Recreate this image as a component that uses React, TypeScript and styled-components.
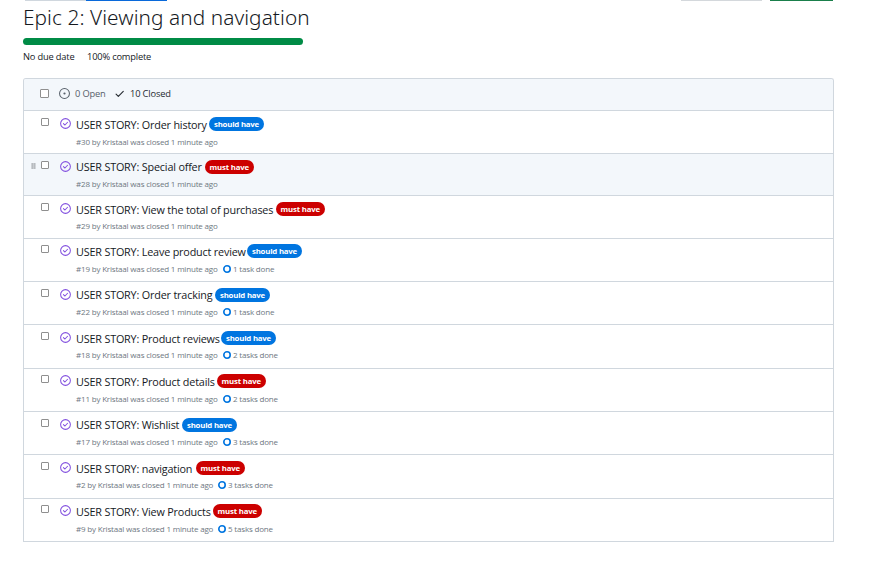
import React from "react";
import styled, { createGlobalStyle } from "styled-components";

const GlobalStyle = createGlobalStyle`
  * { box-sizing: border-box; }
  body {
    margin: 0;
    background: #fff;
    color: #15191e;
    font-family: "Open Sans", "Noto Sans", sans-serif;
    overflow: hidden;
  }
`;

const Page = styled.main`
  width: 883px;
  height: 562px;
  padding: 0 49px 0 23px;
  overflow: hidden;
`;

const TopEdge = styled.div`
  display: flex;
  height: 1px;
  padding-left: 2px;
`;

const Edge = styled.span<{ $width: number; $color: string; $gap?: number }>`
  flex: none;
  width: ${(p) => p.$width}px;
  margin-left: ${(p) => p.$gap ?? 0}px;
  height: 1px;
  background: ${(p) => p.$color};
`;

const Title = styled.h1`
  margin: 3px 0 0;
  height: 26px;
  line-height: 26px;
  font-size: 20.8px;
  font-weight: 300;
  letter-spacing: 0.07px;
  white-space: nowrap;
  color: #15191e;
  font-family: "Noto Sans", "Open Sans", sans-serif;
`;

const Progress = styled.div`
  width: 280px;
  height: 7px;
  margin-top: 8px;
  border-radius: 4px;
  background: #008b46;
`;

const Summary = styled.div`
  display: flex;
  gap: 13px;
  height: 14px;
  margin-top: 5px;
  line-height: 14px;
  font-size: 9.3px;
  letter-spacing: -0.18px;
  white-space: nowrap;
`;

const SummaryItem = styled.span<{ $width: number }>`
  width: ${(p) => p.$width}px;
`;

const Panel = styled.section`
  width: 811px;
  margin-top: 14px;
  border: 1px solid #d0d7de;
  border-bottom: 0;
  border-radius: 3px 3px 0 0;
`;

const PanelHeader = styled.header`
  display: flex;
  align-items: center;
  height: 32px;
  padding: 0 0 2px 16px;
  border-bottom: 1px solid #d0d7de;
  border-radius: 2px 2px 0 0;
  background: #f3f7fb;
  font-size: 9.3px;
  letter-spacing: -0.15px;
`;

const Check = styled.input<{ $size: number }>`
  appearance: none;
  flex: none;
  width: ${(p) => p.$size}px;
  height: ${(p) => p.$size}px;
  margin: 0;
  border: 1px solid #8f8f8f;
  border-radius: 1px;
  background: #fff;
`;

const Tab = styled.span<{ $active?: boolean; $gap: number; $width: number }>`
  display: flex;
  align-items: center;
  gap: 5px;
  width: ${(p) => p.$width}px;
  margin-left: ${(p) => p.$gap}px;
  white-space: nowrap;
  color: ${(p) => (p.$active ? "#24292f" : "#57606a")};
  svg { flex: none; }
`;

const Row = styled.article<{ $height: number; $active?: boolean }>`
  display: flex;
  align-items: flex-start;
  height: ${(p) => p.$height}px;
  border-bottom: 1px solid #d0d7de;
  background: ${(p) => (p.$active ? "#f3f7fb" : "#fff")};
`;

const Handle = styled.span`
  display: flex;
  width: 17px;
  height: 20px;
  padding: 9px 0 0 7px;
`;

const Select = styled.span<{ $top: number }>`
  display: flex;
  width: 19px;
  padding-top: ${(p) => p.$top}px;
`;

const Status = styled.span<{ $top: number }>`
  display: flex;
  width: 16px;
  padding-top: ${(p) => p.$top}px;
`;

const Body = styled.div`
  display: flex;
  flex-direction: column;
`;

const Line = styled.div`
  display: flex;
  height: 24px;
`;

const StoryTitle = styled.a<{ $width: number; $top: number }>`
  width: ${(p) => p.$width}px;
  height: 16px;
  margin-top: ${(p) => p.$top}px;
  line-height: 16px;
  font-size: 10.8px;
  letter-spacing: -0.175px;
  white-space: nowrap;
`;

const Label = styled.span<{ $must: boolean; $top: number; $width: number }>`
  width: ${(p) => p.$width}px;
  height: 14px;
  margin-top: ${(p) => p.$top}px;
  border-radius: 7px;
  background: ${(p) => (p.$must ? "#cc0000" : "#0075e0")};
  color: #fff;
  font-size: 7.8px;
  font-weight: 700;
  line-height: 14px;
  text-align: center;
  letter-spacing: ${(p) => (p.$must ? -0.16 : -0.2)}px;
  white-space: nowrap;
`;

const Meta = styled.div<{ $top: number }>`
  display: flex;
  height: 12px;
  margin-top: ${(p) => p.$top}px;
  line-height: 12px;
  font-size: 8px;
  letter-spacing: -0.18px;
  white-space: nowrap;
  color: #6e7781;
`;

const MetaText = styled.span<{ $width: number }>`
  width: ${(p) => p.$width}px;
`;

const Tasks = styled.span`
  display: flex;
  align-items: center;
  gap: 2px;
`;

const OpenIcon = () => (
  <svg width="11" height="11" viewBox="0 0 16 16" fill="#57606a">
    <circle cx="8" cy="8" r="7.2" fill="none" stroke="#57606a" strokeWidth="1.5" />
    <circle cx="8" cy="8" r="1.6" />
  </svg>
);

const TickIcon = () => (
  <svg width="11" height="11" viewBox="0 0 16 16" fill="none" stroke="#24292f" strokeWidth="1.6">
    <path d="M3 9L6.3 12.3L13.5 5" strokeLinecap="round" strokeLinejoin="round" />
  </svg>
);

const ClosedIcon = () => (
  <svg width="11" height="11" viewBox="0 0 16 16" fill="none" stroke="#8250df" strokeWidth="1.5">
    <circle cx="8" cy="8" r="7.1" />
    <path d="M5 8.2L7.2 10.2L11 6.2" strokeLinecap="round" strokeLinejoin="round" />
  </svg>
);

const RingIcon = () => (
  <svg width="8" height="8" viewBox="0 0 8 8" fill="none">
    <circle cx="4" cy="4" r="3.2" stroke="#0075e0" strokeWidth="1.6" />
  </svg>
);

const GripIcon = () => (
  <svg width="5" height="6" viewBox="0 0 5 6">
    <path d="M0.5 0h4v6h-4z" fill="#d0d4d8" />
    <path d="M0.5 0.3h1.6v1.4H0.5zM2.8 0.3h1.6v1.4H2.8zM0.5 2.3h1.6v1.4H0.5zM2.8 2.3h1.6v1.4H2.8zM0.5 4.3h1.6v1.4H0.5zM2.8 4.3h1.6v1.4H2.8z" fill="#aeb2b6" />
  </svg>
);

interface Story {
  id: number;
  name: string;
  must?: boolean;
  tasks?: number;
  height: number;
  titleWidth: number;
  controlTop: number;
  titleTop: number;
  metaTop?: number;
  active?: boolean;
}

const stories: Story[] = [
  { id: 30, name: "Order history", height: 43, titleWidth: 133, controlTop: 7, titleTop: 6, metaTop: 1 },
  { id: 28, name: "Special offer", must: true, height: 42, titleWidth: 129, controlTop: 7, titleTop: 5, active: true },
  { id: 29, name: "View the total of purchases", must: true, height: 43, titleWidth: 200, controlTop: 7, titleTop: 6 },
  { id: 19, name: "Leave product review", tasks: 1, height: 43, titleWidth: 171, controlTop: 6, titleTop: 5 },
  { id: 22, name: "Order tracking", tasks: 1, height: 43, titleWidth: 139, controlTop: 7, titleTop: 5 },
  { id: 18, name: "Product reviews", tasks: 2, height: 44, titleWidth: 145, controlTop: 7, titleTop: 6 },
  { id: 11, name: "Product details", must: true, tasks: 2, height: 43, titleWidth: 141, controlTop: 6, titleTop: 5 },
  { id: 17, name: "Wishlist", tasks: 3, height: 43, titleWidth: 106, controlTop: 7, titleTop: 5 },
  { id: 2, name: "navigation", must: true, tasks: 3, height: 44, titleWidth: 120, controlTop: 7, titleTop: 6 },
  { id: 9, name: "View Products", must: true, tasks: 5, height: 43, titleWidth: 137, controlTop: 6, titleTop: 5 },
];

const StoryRow = ({ story }: { story: Story }) => (
  <Row $height={story.height} $active={story.active}>
    <Handle>{story.active && <GripIcon />}</Handle>
    <Select $top={story.controlTop}>
      <Check type="checkbox" $size={8} />
    </Select>
    <Status $top={story.controlTop}>
      <ClosedIcon />
    </Status>
    <Body>
      <Line>
        <StoryTitle $width={story.titleWidth} $top={story.titleTop}>
          USER STORY: {story.name}
        </StoryTitle>
        <Label $must={!!story.must} $top={story.controlTop - 1} $width={story.must ? 48.5 : 55}>
          {story.must ? "must have" : "should have"}
        </Label>
      </Line>
      <Meta $top={story.metaTop ?? 0}>
        <MetaText $width={story.id > 9 ? 147 : 142}>#{story.id} by Kristaal was closed 1 minute ago</MetaText>
        {story.tasks && (
          <Tasks>
            <RingIcon />
            {story.tasks} {story.tasks === 1 ? "task" : "tasks"} done
          </Tasks>
        )}
      </Meta>
    </Body>
  </Row>
);

export default function App() {
  return (
    <>
      <GlobalStyle />
      <Page>
        <TopEdge>
          <Edge $width={61} $color="#d0d7de" />
          <Edge $width={81} $color="#0969da" />
          <Edge $width={81} $gap={514} $color="#d4d8dc" />
          <Edge $width={63} $gap={8} $color="#1a7f4b" />
        </TopEdge>
        <Title>Epic 2: Viewing and navigation</Title>
        <Progress />
        <Summary>
          <SummaryItem $width={51}>No due date</SummaryItem>
          <SummaryItem $width={64}>100% complete</SummaryItem>
        </Summary>
        <Panel>
          <PanelHeader>
            <Check type="checkbox" $size={9} />
            <Tab $gap={10} $width={46}>
              <OpenIcon />0 Open
            </Tab>
            <Tab $gap={9} $width={60} $active>
              <TickIcon />10 Closed
            </Tab>
          </PanelHeader>
          {stories.map((story) => (
            <StoryRow key={story.id} story={story} />
          ))}
        </Panel>
      </Page>
    </>
  );
}
